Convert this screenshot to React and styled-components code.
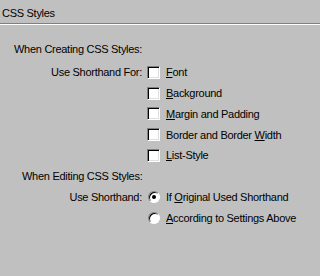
import React from "react";
import styled, { createGlobalStyle } from "styled-components";

const Global = createGlobalStyle`
	html, body {
		margin: 0;
		padding: 0;
		background: #c0c0c0;
	}
	body {
		font-family: "Liberation Sans", Arial, sans-serif;
		font-size: 11px;
		letter-spacing: -0.28px;
		color: #000;
	}
`;

const Panel = styled.div`
	width: 320px;
	height: 276px;
	background: #c0c0c0;
	overflow: hidden;
`;

const Header = styled.div`
	height: 23px;
	display: flex;
	align-items: center;
	padding-left: 2px;
	padding-top: 2px;
	box-sizing: border-box;
`;

const Divider = styled.div`
	height: 0;
	border-top: 1px solid #808080;
	border-bottom: 1px solid #ffffff;
`;

const Heading = styled.div`
	height: 13px;
	line-height: 13px;
	padding-left: ${(p) => p.$indent}px;
	margin-top: ${(p) => p.$top}px;
`;

const Grid = styled.div`
	display: grid;
	grid-template-columns: 147px auto;
	grid-auto-rows: ${(p) => p.$row}px;
	align-items: center;
	margin-top: 4px;
`;

const Label = styled.div`
	text-align: right;
	padding-right: 5px;
`;

const Option = styled.label`
	display: flex;
	align-items: center;
	gap: 6px;
	grid-column: 2;

	&:first-of-type {
		grid-row: 1;
	}
`;

const Box = styled.span`
	width: 13px;
	height: 13px;
	box-sizing: border-box;
	background: #fff;
	border-top: 1px solid #808080;
	border-left: 1px solid #808080;
	border-right: 1px solid #fff;
	border-bottom: 1px solid #fff;
	box-shadow: inset 1px 1px 0 #000, inset -1px -1px 0 #dfdfdf;
	flex-shrink: 0;
`;

const Radio = styled.span`
	width: 12px;
	height: 12px;
	box-sizing: border-box;
	border-radius: 50%;
	background: #fff;
	border: 1px solid;
	border-color: #808080 #fff #fff #808080;
	box-shadow: inset 1px 1px 0 #000;
	display: flex;
	align-items: center;
	justify-content: center;
	flex-shrink: 0;
	margin-left: 1px;

	&::after {
		content: "";
		width: 4px;
		height: 4px;
		border-radius: 50%;
		background: #000;
		display: ${(p) => (p.$checked ? "block" : "none")};
	}
`;

const Key = styled.span`
	text-decoration: underline;
`;

const Text = ({ children, k }) => {
	const i = children.indexOf(k);
	return (
		<span>
			{children.slice(0, i)}
			<Key>{k}</Key>
			{children.slice(i + 1)}
		</span>
	);
};

const checks = [
	["Font", "F"],
	["Background", "B"],
	["Margin and Padding", "M"],
	["Border and Border Width", "W"],
	["List-Style", "L"],
];

export default function App() {
	return (
		<Panel>
			<Global />
			<Header>CSS Styles</Header>
			<Divider />
			<Heading $indent={14} $top={18}>When Creating CSS Styles:</Heading>
			<Grid $row={20.75} style={{ marginTop: 6 }}>
				<Label>Use Shorthand For:</Label>
				{checks.map(([t, k]) => (
					<Option key={t}>
						<Box />
						<Text k={k}>{t}</Text>
					</Option>
				))}
			</Grid>
			<Heading $indent={22} $top={4}>When Editing CSS Styles:</Heading>
			<Grid $row={21}>
				<Label>Use Shorthand:</Label>
				<Option>
					<Radio $checked />
					<Text k="O">If Original Used Shorthand</Text>
				</Option>
				<Option>
					<Radio />
					<Text k="A">According to Settings Above</Text>
				</Option>
			</Grid>
		</Panel>
	);
}
